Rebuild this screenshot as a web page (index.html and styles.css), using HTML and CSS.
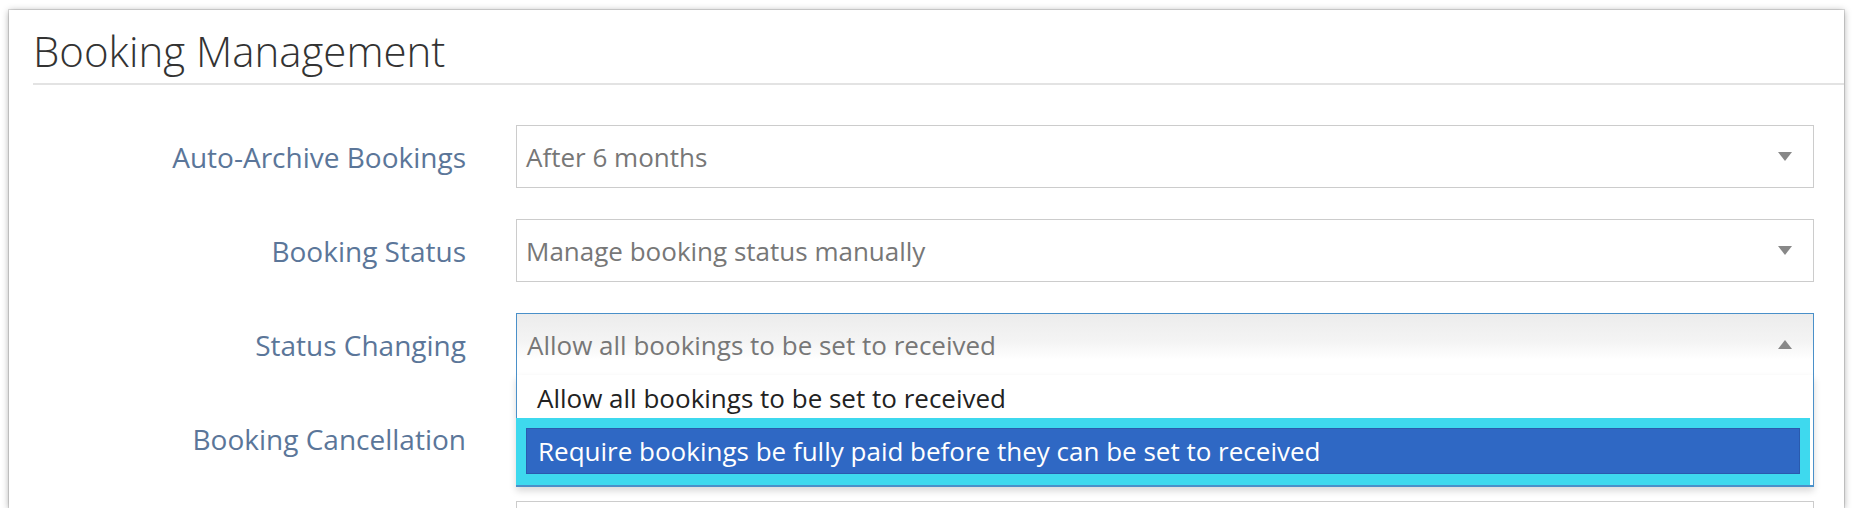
FILE: index.html
```html
<!DOCTYPE html>
<html>
<head>
    <meta charset="utf-8">
    <meta name="viewport" content="width=device-width, initial-scale=1">
    <title>Booking Management</title>
    <link rel="stylesheet" href="styles.css">
</head>

<body>
    <div class="panel">
        <h2 class="panel-title">Booking Management</h2>

        <div class="settings">
            <label class="field-label">Auto-Archive Bookings</label>
            <div class="select">
                <span class="select-value">After 6 months</span>
                <span class="arrow"></span>
            </div>

            <label class="field-label">Booking Status</label>
            <div class="select">
                <span class="select-value">Manage booking status manually</span>
                <span class="arrow"></span>
            </div>

            <label class="field-label">Status Changing</label>
            <div class="select open">
                <span class="select-value">Allow all bookings to be set to received</span>
                <span class="arrow up"></span>

                <!-- open dropdown list -->
                <div class="dropdown">
                    <div class="option">Allow all bookings to be set to received</div>
                    <div class="option-focus">
                        <div class="option highlighted">Require bookings be fully paid before they can be set to received</div>
                    </div>
                </div>
            </div>

            <label class="field-label">Booking Cancellation</label>
            <div class="select">
                <span class="select-value"></span>
                <span class="arrow"></span>
            </div>

            <label class="field-label"></label>
            <div class="select">
                <span class="select-value"></span>
                <span class="arrow"></span>
            </div>
        </div>
    </div>
</body>
</html>
```

FILE: styles.css
```css
/* Booking settings panel */
body {
    font-family: "Open Sans", "Liberation Sans", sans-serif;
    margin: 0;
    padding: 10px 10px 0 9px;
    background-color: #fff;
}
.panel {
    height: 498px;
    overflow: hidden;
    background-color: #fff;
    box-shadow: 0 0 0 1px rgba(0, 0, 0, 0.12), 0 1px 7px rgba(0, 0, 0, 0.35);
}
.panel-title {
    margin: 0 0 0 24px;
    padding: 16px 0 8px 0;
    font-size: 42px;
    font-weight: 300;
    line-height: 49px;
    color: #333;
    border-bottom: 2px solid #e3e3e3;
}
.settings {
    display: grid;
    grid-template-columns: 433px 1fr;
    column-gap: 50px;
    row-gap: 31px;
    padding: 40px 30px 0 24px;
}
.field-label {
    align-self: center;
    text-align: right;
    font-size: 28px;
    color: #5b7699;
}
.select {
    position: relative;
    display: flex;
    align-items: center;
    height: 63px;
    box-sizing: border-box;
    padding: 0 21px 0 9px;
    border: 1px solid #ccc;
    font-size: 26px;
    color: #777;
    background-color: #fff;
}
.select-value {
    flex: 1;
    white-space: nowrap;
}
.arrow {
    width: 0;
    height: 0;
    border-left: 7.5px solid transparent;
    border-right: 7.5px solid transparent;
    border-top: 9px solid #888;
}
.arrow.up {
    border-top: 0;
    border-bottom: 9px solid #888;
}
.select.open {
    z-index: 2;
    padding-left: 10px;
    border-color: #4a90c9;
    background-image: linear-gradient(to bottom, #ececec 0%, #f4f4f4 45%, #fff 75%);
}
.dropdown {
    position: absolute;
    top: 100%;
    left: -1px;
    right: -1px;
    border: 1px solid #4a90c9;
    border-top: 0;
    border-bottom-width: 2px;
    background-color: #fff;
    box-shadow: 0 4px 7px rgba(0, 0, 0, 0.15);
}
.option {
    height: 43px;
    line-height: 39px;
    padding: 4px 0 0 20px;
    box-sizing: border-box;
    color: #222;
    white-space: nowrap;
}
.option-focus {
    margin: 0 3px 0 -1px;
    padding: 10px 10px 11px 10px;
    background-color: #3ed9ee;
}
.option.highlighted {
    height: 46px;
    line-height: 44px;
    padding: 0 0 0 11px;
    border: 1px solid #2a5aae;
    background-color: #2f68c4;
    color: #fff;
}
```
